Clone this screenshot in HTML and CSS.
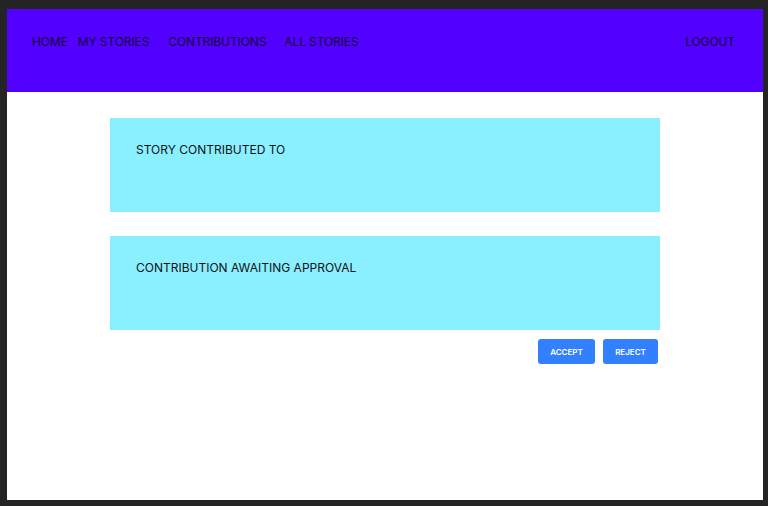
FILE: index.html
```html
<!DOCTYPE html>
<html>
<head>
<meta charset="utf-8">
<link rel="stylesheet" href="styles.css">
</head>
<body>
<div class="page">
  <nav class="navbar">
    <div class="nav-left">
      <a class="nav-link home">HOME</a>
      <a class="nav-link mystories">MY STORIES</a>
      <a class="nav-link contributions">CONTRIBUTIONS</a>
      <a class="nav-link">ALL STORIES</a>
    </div>
    <a class="nav-link">LOGOUT</a>
  </nav>
  <main class="content">
    <section class="card">STORY CONTRIBUTED TO</section>
    <section class="card">CONTRIBUTION AWAITING APPROVAL</section>
    <div class="actions">
      <button class="btn">ACCEPT</button>
      <button class="btn">REJECT</button>
    </div>
  </main>
</div>
</body>
</html>
```
FILE: styles.css
```css
html, body {
  margin: 0;
  padding: 0;
  background: #242424;
}
body {
  font-family: Inter, "Noto Sans", sans-serif;
}
.page {
  margin: 9px 5px 0 7px;
  height: 491px;
  background: #ffffff;
}
.navbar {
  height: 83px;
  background: #5200ff;
  display: flex;
  justify-content: space-between;
  align-items: flex-start;
  padding: 25px 28px 0 25px;
  box-sizing: border-box;
}
.nav-left {
  display: flex;
}
.nav-link {
  font-size: 12px;
  line-height: 16px;
  letter-spacing: -0.1px;
  color: #14092e;
}
.home { margin-right: 10px; }
.mystories { margin-right: 19px; }
.contributions { margin-right: 18px; }
.content {
  width: 550px;
  margin: 26px auto 0;
  display: flex;
  flex-direction: column;
}
.card {
  height: 94px;
  box-sizing: border-box;
  background: #8af0ff;
  padding: 24px 26px;
  font-size: 12px;
  line-height: 16px;
  color: #111;
  margin-bottom: 24px;
}
.card + .card { margin-bottom: 0; }
.actions {
  display: flex;
  justify-content: flex-end;
  gap: 8px;
  margin-top: 9px;
  padding-right: 2px;
}
.btn {
  height: 25px;
  border: none;
  border-radius: 3px;
  background: #3380ff;
  color: #fff;
  font-family: Inter, sans-serif;
  font-size: 8px;
  font-weight: 600;
  padding: 0;
  width: 57px;
}
.btn + .btn { width: 55px; }
```
